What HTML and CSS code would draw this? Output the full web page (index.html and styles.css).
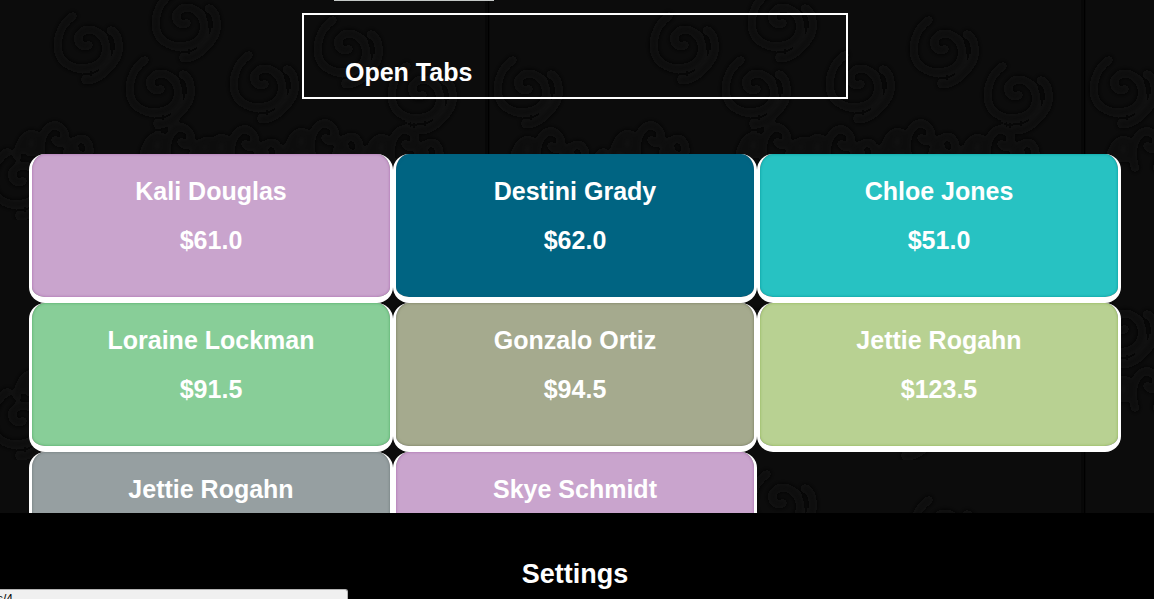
FILE: index.html
```
<!DOCTYPE html>
<html lang="en">
<head>
<meta charset="utf-8">
<title>Open Tabs</title>
<link rel="stylesheet" href="styles.css">
</head>
<body>
<svg class="wallpaper" aria-hidden="true">
  <defs>
    <filter id="soft"><feGaussianBlur stdDeviation="2.5"/></filter>
    <linearGradient id="seam"><stop offset="0" stop-color="#000" stop-opacity="0"/><stop offset=".5" stop-color="#000"/><stop offset="1" stop-color="#000" stop-opacity="0"/></linearGradient>
    <g id="scroll" fill="none" stroke-linecap="round">
      <path d="M2 1C-6 6-14-5-5-12S20-10 19 6-4 30-20 20-30-18-14-28"/>
      <path d="M24-14C34-8 34 8 27 18S8 38-2 36"/>
    </g>
    <g id="leaf" fill="none" stroke-linecap="round">
      <path d="M-34 20C-30-6-12-8-14 8S-30 14-24 4M-8 26C-16 0 0-18 10-8S10 12 4 4M14 26C18 2 34-4 38 10S26 22 24 14"/>
    </g>
    <pattern id="damask" x="-109" y="-20" width="596" height="240" patternUnits="userSpaceOnUse">
      <g stroke="#111" stroke-width="8" filter="url(#soft)">
        <use href="#scroll" x="268" y="108"/>
        <use href="#scroll" x="372" y="103"/>
        <use href="#scroll" x="294" y="42"/>
        <use href="#scroll" x="40" y="108"/>
        <use href="#scroll" x="196" y="64"/>
        <use href="#scroll" x="456" y="68"/>
        <use href="#scroll" x="530" y="114"/>
        <use href="#leaf" x="286" y="158"/>
        <use href="#leaf" x="350" y="160"/>
        <use href="#leaf" x="160" y="156"/>
        <use href="#leaf" x="60" y="162"/>
        <use href="#leaf" x="430" y="154"/>
        <use href="#leaf" x="510" y="160"/>
        <use href="#scroll" x="130" y="200"/>
        <use href="#scroll" x="420" y="200"/>
      </g>
      <rect width="3" height="240" fill="url(#seam)"/>
      <rect x="594" width="2" height="240" fill="#070707"/>
    </pattern>
  </defs>
  <rect width="100%" height="100%" fill="url(#damask)"/>
</svg>
<main class="page">
  <div class="panel-edge"></div>
  <header class="title-box"><h1>Open Tabs</h1></header>
  <nav class="tabs" aria-label="Open tabs">
    <a class="tab orchid" href="#"><span>Kali Douglas</span><span>$61.0</span></a>
    <a class="tab ocean" href="#"><span>Destini Grady</span><span>$62.0</span></a>
    <a class="tab teal" href="#"><span>Chloe Jones</span><span>$51.0</span></a>
    <a class="tab green" href="#"><span>Loraine Lockman</span><span>$91.5</span></a>
    <a class="tab olive" href="#"><span>Gonzalo Ortiz</span><span>$94.5</span></a>
    <a class="tab lime" href="#"><span>Jettie Rogahn</span><span>$123.5</span></a>
    <a class="tab slate" href="#"><span>Jettie Rogahn</span></a>
    <a class="tab orchid" href="#"><span>Skye Schmidt</span></a>
  </nav>
</main>
<footer class="footer"><a href="#">Settings</a></footer>
<div class="status">s/4</div>
</body>
</html>
```
FILE: styles.css
```
* { box-sizing: border-box; }

body {
  margin: 0;
  height: 100vh;
  display: flex;
  flex-direction: column;
  overflow: hidden;
  background: #0c0c0c;
  color: #fff;
  font-family: "Liberation Sans", Arial, sans-serif;
  font-size: 25px;
  font-weight: bold;
  line-height: 29px;
}

a { color: inherit; text-decoration: none; }

.wallpaper {
  position: absolute;
  z-index: -1;
  inset: 0;
  width: 100%;
  height: 100%;
}

.page {
  flex: 1;
  min-height: 0;
  overflow: hidden;
  padding: 0 33px 0 29px;
}

.panel-edge {
  width: 160px;
  height: 1px;
  margin-left: 305px;
  background: #c4c8c6;
}

.title-box {
  width: 50%;
  margin: 12px auto 55px;
  padding: 43px 41px 10px;
  border: 2px solid #fff;
}

.title-box h1 {
  margin: 0;
  font-size: inherit;
}

.tabs {
  display: grid;
  grid-template-columns: repeat(3, 1fr);
  grid-auto-rows: 149px;
}

.tab {
  display: flex;
  flex-direction: column;
  align-items: center;
  gap: 20px;
  padding-top: 23px;
  border: solid #fff;
  border-width: 0 3px 6px;
  border-radius: 16px;
  background: var(--fill);
  background-clip: padding-box;
  box-shadow: inset 0 0 3px var(--edge);
}

.orchid { --fill: #c9a4cd; --edge: #a868ac; }
.ocean { --fill: #006482; --edge: #005f7d; }
.teal { --fill: #27c2c2; --edge: #009799; }
.green { --fill: #88ce98; --edge: #4ba860; }
.olive { --fill: #a5aa8e; --edge: #74785a; }
.lime { --fill: #b8d192; --edge: #8db34f; }
.slate { --fill: #969fa1; --edge: #697577; }

.footer {
  height: 86px;
  padding: 47px 4px 0 0;
  background: #000;
  text-align: center;
  font-size: 27px;
}

.status {
  position: absolute;
  left: 0;
  bottom: 0;
  width: 348px;
  height: 10px;
  padding-top: 2px;
  overflow: hidden;
  border: solid #b4b4b4;
  border-width: 1px 1px 0 0;
  border-radius: 0 3px 0 0;
  background: #f0f0f0;
  color: #000;
  font-size: 12px;
  font-weight: normal;
  line-height: 14px;
  text-indent: -3px;
}
```
